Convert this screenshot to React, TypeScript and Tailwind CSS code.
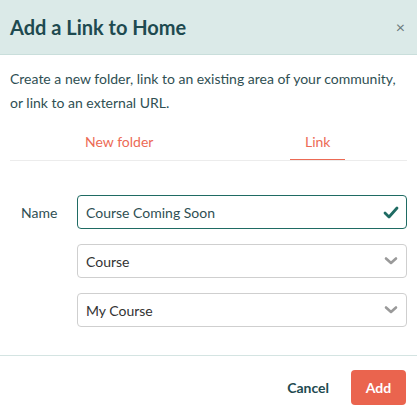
import React from 'react';

const ChevronDown = () => (
  <svg width="14" height="10" viewBox="0 0 14 10" fill="none">
    <path d="M2 2.5l5 4.5 5-4.5" stroke="#9a9a9a" strokeWidth="2.6" strokeLinecap="round" strokeLinejoin="round" />
  </svg>
);

const Check = () => (
  <svg width="16" height="13" viewBox="0 0 16 13" fill="none">
    <path d="M2 7l4 4 8-9" stroke="#1f6b63" strokeWidth="2.8" strokeLinecap="round" strokeLinejoin="round" />
  </svg>
);

const SelectBox: React.FC<{ value: string }> = ({ value }) => (
  <div className="h-[34px] border border-[#cfcfcf] rounded-[4px] flex items-center justify-between pl-[8px] pr-[8px]">
    <span className="text-[14px] text-[#333]">{value}</span>
    <ChevronDown />
  </div>
);

export default function App() {
  return (
    <div className="w-[417px] h-[416px] bg-white flex flex-col" style={{ fontFamily: '"Lato", "Open Sans", sans-serif' }}>
      {/* Header */}
      <div className="h-[55px] bg-[#dbeae8] border-b border-[#c9dedb] flex items-center justify-between pl-[10px] pr-[12px] shrink-0">
        <h1 className="text-[20px] font-bold text-[#1e4a50]">Add a Link to Home</h1>
        <span className="text-[#6b7b7d] text-[16px] leading-none">×</span>
      </div>

      {/* Body */}
      <div className="px-[10px] pt-[12px]">
        <p className="text-[14px] leading-[24px] text-[#2f4f53]">
          Create a new folder, link to an existing area of your community, or link to an external URL.
        </p>

        {/* Tabs */}
        <div className="mt-[16px] ml-[10px] -mr-[10px] flex">
          <div className="flex-1 flex justify-center">
            <span className="text-[14px] text-[#ec6a55] pb-[8px]">New folder</span>
          </div>
          <div className="flex-1 flex justify-center">
            <span className="text-[14px] text-[#ec6a55] pb-[7px] px-[15px] border-b-[1.5px] border-[#ec6a55]">Link</span>
          </div>
        </div>
        <div className="h-px bg-[#ececec]" />

        <div className="mt-[34px] flex flex-col gap-[15px]">
          <div className="flex items-center">
            <label className="w-[67px] pl-[11px] text-[14px] text-[#2f4f53]">Name</label>
            <div className="flex-1 h-[34px] border border-[#1f6b63] rounded-[4px] flex items-center justify-between pl-[8px] pr-[7px]">
              <span className="text-[14px] text-[#2f4f53]">Course Coming Soon</span>
              <Check />
            </div>
          </div>
          <div className="pl-[67px]">
            <SelectBox value="Course" />
          </div>
          <div className="pl-[67px]">
            <SelectBox value="My Course" />
          </div>
        </div>
      </div>

      {/* Footer */}
      <div className="mt-[28px] border-t border-[#d4e4e2] flex items-center justify-end gap-[22px] pr-[11px] pt-[14px]">
        <span className="text-[14px] font-bold text-[#1e4a50]">Cancel</span>
        <button className="w-[55px] h-[35px] rounded-[4px] bg-[#ea644e] text-white text-[14px] font-bold">Add</button>
      </div>
    </div>
  );
}
